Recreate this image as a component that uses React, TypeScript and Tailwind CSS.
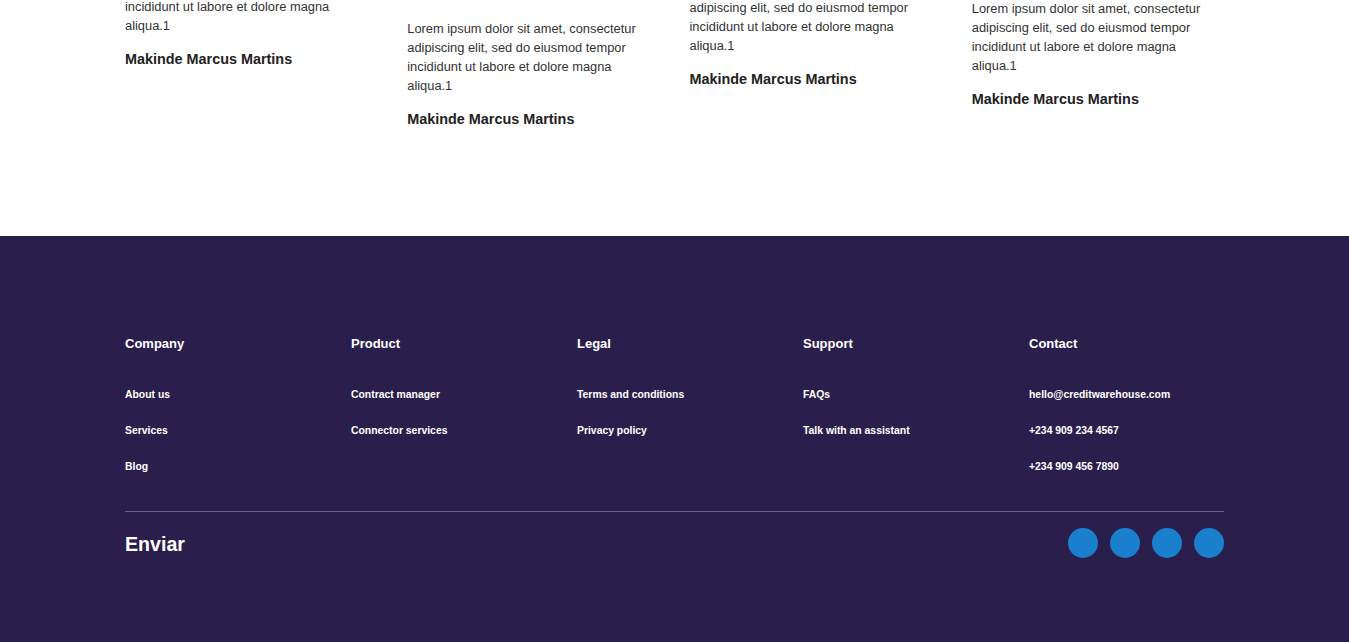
import React from "react";

const lorem =
  "Lorem ipsum dolor sit amet, consectetur adipiscing elit, sed do eiusmod tempor incididunt ut labore et dolore magna aliqua.1";

const offsets = ["pt-0", "pt-[60px]", "pt-[20px]", "pt-[40px]"];

const columns: { title: string; links: string[] }[] = [
  { title: "Company", links: ["About us", "Services", "Blog"] },
  { title: "Product", links: ["Contract manager", "Connector services"] },
  { title: "Legal", links: ["Terms and conditions", "Privacy policy"] },
  { title: "Support", links: ["FAQs", "Talk with an assistant"] },
  {
    title: "Contact",
    links: ["hello@creditwarehouse.com", "+234 909 234 4567", "+234 909 456 7890"],
  },
];

export default function App() {
  return (
    <div className="min-h-[642px] bg-white font-['Liberation_Sans',Arial,sans-serif]">
      <section className="h-[236px] overflow-hidden">
        <div className="mx-auto mt-[-41px] grid w-[1099px] grid-cols-4 gap-x-[30px]">
          {offsets.map((o, i) => (
            <div key={i} className={o}>
              <p className="text-[12.85px] leading-[19px] text-[#333333]">{lorem}</p>
              <p className="mt-[15px] text-[14.4px] font-bold leading-[19px] text-[#222222]">
                Makinde Marcus Martins
              </p>
            </div>
          ))}
        </div>
      </section>
      <footer className="h-[406px] bg-[#2a1f4c] text-white">
        <div className="mx-auto w-[1099px] pt-[100px]">
          <div className="grid grid-cols-5 gap-x-[31px]">
            {columns.map((c) => (
              <div key={c.title}>
                <h3 className="text-[13px] font-bold leading-[16px]">{c.title}</h3>
                <ul className="mt-[36px] flex flex-col gap-[22px]">
                  {c.links.map((l) => (
                    <li key={l} className="text-[10.4px] font-bold leading-[14px]">
                      {l}
                    </li>
                  ))}
                </ul>
              </div>
            ))}
          </div>
          <div className="mt-[37px] h-px bg-[#6b5f8c]" />
          <div className="mt-[17px] flex items-center justify-between">
            <span className="text-[19.6px] font-bold leading-[30px]">Enviar</span>
            <div className="flex gap-[12px] -translate-y-px">
              {[0, 1, 2, 3].map((i) => (
                <span key={i} className="block h-[30px] w-[30px] rounded-full bg-[#1a7fcc]" />
              ))}
            </div>
          </div>
        </div>
      </footer>
    </div>
  );
}
